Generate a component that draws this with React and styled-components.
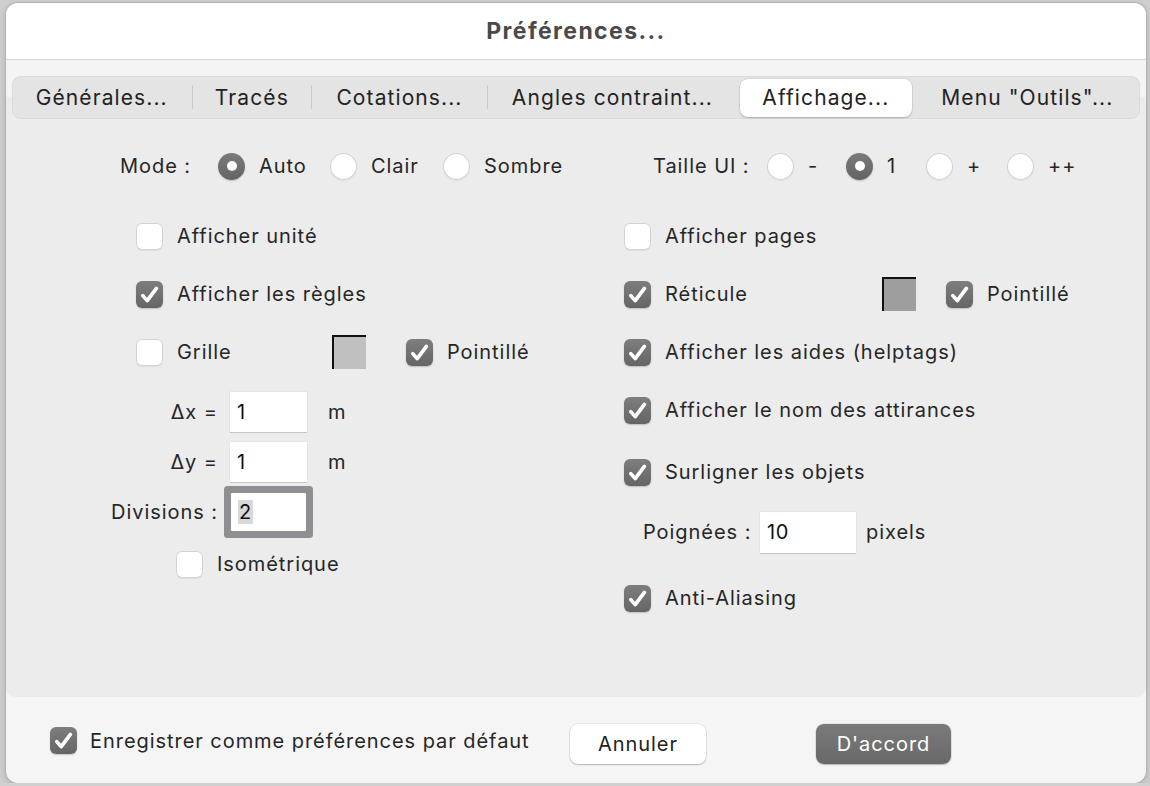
import styled, { createGlobalStyle } from "styled-components";

const GlobalStyle = createGlobalStyle`
  *, *::before, *::after { box-sizing: border-box; }
  html, body { margin: 0; padding: 0; }
  body {
    background: #d0d0d0;
    font-family: Inter, "Noto Sans", sans-serif;
    color: #262626;
    letter-spacing: 0.95px;
    -webkit-font-smoothing: antialiased;
  }
`;

const Window = styled.div`
  width: 1140px;
  height: 780px;
  margin: 3px 0 0 6px;
  background: #f5f5f5;
  border-radius: 12px;
  overflow: hidden;
  box-shadow: 0 0 0 1px #b2b2b2, 0 2px 8px rgba(0, 0, 0, 0.18);
  display: flex;
  flex-direction: column;
`;

const TitleBar = styled.div`
  height: 57px;
  flex-shrink: 0;
  background: #ffffff;
  border-bottom: 1px solid #d4d4d4;
  display: flex;
  align-items: center;
  justify-content: center;
  font-size: 23px;
  font-weight: 700;
  letter-spacing: 1.4px;
  color: #4a4a4a;
`;

const TabArea = styled.div`
  padding: 16px 6px 0;
  flex-shrink: 0;
  background: linear-gradient(to bottom, #f4f4f4 37px, #ececec 37px);
`;

const TabBar = styled.div`
  display: flex;
  align-items: center;
  height: 43px;
  background: #e4e4e4;
  border-radius: 9px;
  box-shadow: inset 0 0 0 1px #dbdbdb;
`;

const Tab = styled.div`
  width: ${(p) => p.$w}px;
  height: ${(p) => (p.$active ? 38 : 43)}px;
  margin: ${(p) => (p.$active ? "0 2px" : "0")};
  display: flex;
  align-items: center;
  justify-content: center;
  font-size: 21px;
  letter-spacing: 1.1px;
  color: #222;
  white-space: nowrap;
  border-radius: 8px;
  background: ${(p) => (p.$active ? "#ffffff" : "transparent")};
  box-shadow: ${(p) =>
    p.$active ? "0 1px 2px rgba(0,0,0,0.22), 0 0 0 0.5px rgba(0,0,0,0.08)" : "none"};
`;

const Divider = styled.div`
  width: 1px;
  height: 23px;
  flex-shrink: 0;
  background: ${(p) => (p.$hidden ? "transparent" : "#c8c8c8")};
`;

const Panel = styled.div`
  flex: 1;
  background: #ececec;
  border-radius: 0 0 9px 9px;
  padding-top: 27px;
`;

const Columns = styled.div`
  display: grid;
  grid-template-columns: 500px 1fr;
  padding-left: 94px;
`;

const Column = styled.div`
  display: flex;
  flex-direction: column;
`;

const Row = styled.div`
  display: flex;
  align-items: center;
  height: ${(p) => p.$h || 40}px;
  margin-top: ${(p) => p.$gap || 0}px;
  padding-left: ${(p) => p.$indent || 0}px;
`;

const Text = styled.span`
  font-size: 20px;
  white-space: nowrap;
  color: #262626;
`;

const FieldLabel = styled(Text)`
  display: inline-block;
  width: ${(p) => p.$w}px;
  text-align: ${(p) => p.$align || "left"};
  flex-shrink: 0;
`;

const CheckItem = styled.label`
  display: flex;
  align-items: center;
  gap: 14px;
  width: ${(p) => (p.$w ? `${p.$w}px` : "auto")};
  flex-shrink: 0;
`;

const Box = styled.span`
  width: 27px;
  height: 27px;
  flex-shrink: 0;
  border-radius: 6px;
  display: flex;
  align-items: center;
  justify-content: center;
  background: ${(p) =>
    p.$checked ? "linear-gradient(to bottom, #7e7e7e, #656565)" : "#ffffff"};
  box-shadow: ${(p) =>
    p.$checked
      ? "0 1px 1.5px rgba(0,0,0,0.2)"
      : "inset 0 0 0 1px #d2d2d2, 0 1px 1px rgba(0,0,0,0.06)"};
`;

const RadioOption = styled.label`
  display: flex;
  align-items: center;
  gap: 14px;
  width: ${(p) => (p.$w ? `${p.$w}px` : "auto")};
  flex-shrink: 0;
`;

const RadioDot = styled.span`
  width: 27px;
  height: 27px;
  flex-shrink: 0;
  border-radius: 50%;
  display: flex;
  align-items: center;
  justify-content: center;
  background: ${(p) =>
    p.$checked ? "linear-gradient(to bottom, #7b7b7b, #636363)" : "#ffffff"};
  box-shadow: ${(p) =>
    p.$checked
      ? "0 1px 1.5px rgba(0,0,0,0.2)"
      : "inset 0 0 0 1px #d0d0d0, 0 1px 1px rgba(0,0,0,0.06)"};

  &::after {
    content: "";
    display: ${(p) => (p.$checked ? "block" : "none")};
    width: 10px;
    height: 10px;
    border-radius: 50%;
    background: #ffffff;
  }
`;

const Swatch = styled.span`
  width: 34px;
  height: 34px;
  flex-shrink: 0;
  background: ${(p) => p.$color};
  border-top: 2px solid #111;
  border-left: 2px solid #111;
  margin-right: ${(p) => p.$mr}px;
`;

const Field = styled.div`
  width: ${(p) => p.$w || 77}px;
  height: ${(p) => p.$h || 40}px;
  flex-shrink: 0;
  background: #ffffff;
  display: flex;
  align-items: center;
  padding-left: 7px;
  font-size: 20px;
  letter-spacing: 0.5px;
  color: #111;
  border-radius: ${(p) => (p.$focused ? "1px" : "0")};
  box-shadow: ${(p) =>
    p.$focused
      ? "0 0 0 7px #8e8e93"
      : "0 1px 0 #c6c6c6, 0 0 0 0.5px #dedede"};
  margin: ${(p) => p.$m || "0"};
`;

const Selection = styled.span`
  background: #d9d9d9;
  padding: 0 1px;
`;

const Footer = styled.div`
  height: 86px;
  flex-shrink: 0;
  display: flex;
  align-items: flex-start;
  padding: 27px 0 0 44px;
`;

const FooterCheck = styled(CheckItem)`
  margin-top: 3px;
  gap: 13px;
`;

const Button = styled.button`
  width: ${(p) => p.$w}px;
  height: 40px;
  margin-left: ${(p) => p.$ml || 0}px;
  border: none;
  border-radius: 8px;
  font-family: inherit;
  font-size: 20px;
  letter-spacing: 0.95px;
  color: ${(p) => (p.$primary ? "#ffffff" : "#222")};
  background: ${(p) =>
    p.$primary ? "linear-gradient(to bottom, #7a7a7a, #696969)" : "#ffffff"};
  box-shadow: 0 1px 1.5px rgba(0, 0, 0, 0.22), 0 0 0 0.5px rgba(0, 0, 0, 0.1);
`;

const Check = () => (
  <svg width="27" height="27" viewBox="0 0 27 27">
    <path
      d="M6.8 14.6 L11.2 19.6 L20.4 7.4"
      fill="none"
      stroke="#ffffff"
      strokeWidth="3.7"
      strokeLinecap="round"
      strokeLinejoin="round"
    />
  </svg>
);

const Checkbox = ({ checked, label, w }) => (
  <CheckItem $w={w}>
    <Box $checked={checked}>{checked && <Check />}</Box>
    {label && <Text>{label}</Text>}
  </CheckItem>
);

const Radio = ({ checked, label, w }) => (
  <RadioOption $w={w}>
    <RadioDot $checked={checked} />
    <Text>{label}</Text>
  </RadioOption>
);

const tabs = [
  { label: "Générales...", w: 180 },
  { label: "Tracés", w: 119 },
  { label: "Cotations...", w: 175 },
  { label: "Angles contraint...", w: 250 },
  { label: "Affichage...", w: 172, active: true },
  { label: 'Menu "Outils"...', w: 226 },
];

export default function App() {
  return (
    <>
      <GlobalStyle />
      <Window>
        <TitleBar>Préférences...</TitleBar>

        <TabArea>
          <TabBar>
            {tabs.map((t, i) => [
              i > 0 && (
                <Divider
                  key={"d" + i}
                  $hidden={t.active || tabs[i - 1].active}
                />
              ),
              <Tab key={t.label} $w={t.w} $active={t.active}>
                {t.label}
              </Tab>,
            ])}
          </TabBar>
        </TabArea>

        <Panel>
          <Columns>
            <Column>
              <Row $indent={20}>
                <FieldLabel $w={98}>Mode :</FieldLabel>
                <Radio checked label="Auto" w={112} />
                <Radio label="Clair" w={113} />
                <Radio label="Sombre" />
              </Row>
              <Row $gap={30} $indent={36}>
                <Checkbox label="Afficher unité" />
              </Row>
              <Row $gap={18} $indent={36}>
                <Checkbox checked label="Afficher les règles" />
              </Row>
              <Row $gap={18} $indent={36}>
                <Checkbox label="Grille" w={196} />
                <Swatch $color="#c0c0c0" $mr={40} />
                <Checkbox checked label="Pointillé" />
              </Row>
              <Row $gap={20}>
                <FieldLabel $w={118} $align="right">
                  Δx =
                </FieldLabel>
                <Field $m="0 21px 0 12px">1</Field>
                <Text>m</Text>
              </Row>
              <Row $gap={10}>
                <FieldLabel $w={118} $align="right">
                  Δy =
                </FieldLabel>
                <Field $m="0 21px 0 12px">1</Field>
                <Text>m</Text>
              </Row>
              <Row $gap={4} $h={51}>
                <FieldLabel $w={118} $align="right">
                  Divisions :
                </FieldLabel>
                <Field $focused $w={75} $h={38} $m="0 0 0 13px">
                  <Selection>2</Selection>
                </Field>
              </Row>
              <Row $gap={7} $indent={76}>
                <Checkbox label="Isométrique" />
              </Row>
            </Column>

            <Column>
              <Row $indent={53}>
                <FieldLabel $w={114}>Taille UI :</FieldLabel>
                <Radio label="-" w={79} />
                <Radio checked label="1" w={80} />
                <Radio label="+" w={81} />
                <Radio label="++" />
              </Row>
              <Row $gap={30} $indent={24}>
                <Checkbox label="Afficher pages" />
              </Row>
              <Row $gap={18} $indent={24}>
                <Checkbox checked label="Réticule" w={258} />
                <Swatch $color="#9e9e9e" $mr={30} />
                <Checkbox checked label="Pointillé" />
              </Row>
              <Row $gap={18} $indent={24}>
                <Checkbox checked label="Afficher les aides (helptags)" />
              </Row>
              <Row $gap={18} $indent={24}>
                <Checkbox checked label="Afficher le nom des attirances" />
              </Row>
              <Row $gap={22} $indent={24}>
                <Checkbox checked label="Surligner les objets" />
              </Row>
              <Row $gap={20} $indent={43}>
                <FieldLabel $w={117}>Poignées :</FieldLabel>
                <Field $w={96} $h={41} $m="0 10px 0 0">
                  10
                </Field>
                <Text>pixels</Text>
              </Row>
              <Row $gap={26} $indent={24}>
                <Checkbox checked label="Anti-Aliasing" />
              </Row>
            </Column>
          </Columns>
        </Panel>

        <Footer>
          <FooterCheck $w={520}>
            <Box $checked>
              <Check />
            </Box>
            <Text>Enregistrer comme préférences par défaut</Text>
          </FooterCheck>
          <Button $w={136}>Annuler</Button>
          <Button $w={135} $ml={110} $primary>
            D'accord
          </Button>
        </Footer>
      </Window>
    </>
  );
}
